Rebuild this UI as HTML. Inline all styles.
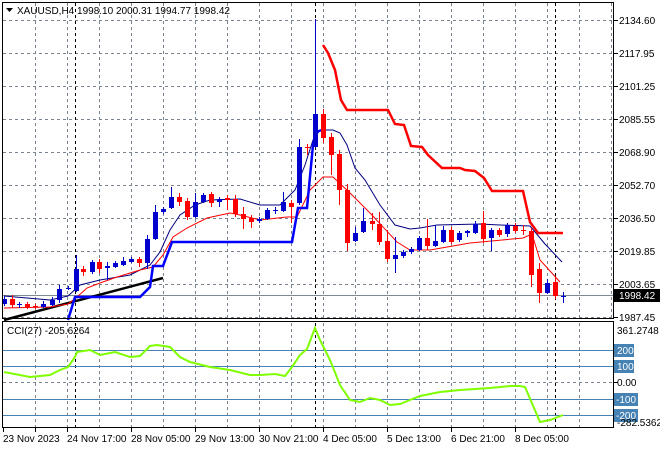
<!DOCTYPE html>
<html><head><meta charset="utf-8"><style>
html,body{margin:0;padding:0;background:#fff;}
svg{display:block;}
text{font-family:"Liberation Sans",sans-serif;font-size:10px;fill:#000;}
</style></head><body>
<svg width="660" height="450" viewBox="0 0 660 450" xmlns="http://www.w3.org/2000/svg">
<rect width="660" height="450" fill="#fff"/>
<g stroke="#7a8490" stroke-dasharray="3,3" stroke-width="1">
<path d="M35.5 3V318M67.5 3V318M99.5 3V318M131.5 3V318M163.5 3V318M195.5 3V318M227.5 3V318M259.5 3V318M291.5 3V318M323.5 3V318M355.5 3V318M387.5 3V318M419.5 3V318M451.5 3V318M483.5 3V318M515.5 3V318M547.5 3V318M579.5 3V318M611.5 3V318"/>
<path d="M35.5 323V427M67.5 323V427M99.5 323V427M131.5 323V427M163.5 323V427M195.5 323V427M227.5 323V427M259.5 323V427M291.5 323V427M323.5 323V427M355.5 323V427M387.5 323V427M419.5 323V427M451.5 323V427M483.5 323V427M515.5 323V427M547.5 323V427M579.5 323V427"/>
<path d="M3 20.5H614M3 53.5H614M3 86.5H614M3 119.5H614M3 152.5H614M3 185.5H614M3 218.5H614M3 251.5H614M3 284.5H614M3 317.5H614M3 382.5H614"/>
</g>
<g stroke="#000" stroke-dasharray="3,3" stroke-width="1">
<path d="M75.5 3V318M315.5 3V318M555.5 3V318M75.5 323V427M315.5 323V427M555.5 323V427"/>
</g>
<path d="M3 295.5H614" stroke="#808890" stroke-width="1"/>
<g stroke="#4682b4" stroke-width="1"><path d="M3 350.5H614M3 366.5H614M3 399.5H614M3 415.5H614"/></g>
<path d="M4 320L163 278" stroke="#000" stroke-width="2.5"/>
<polyline fill="none" stroke="#000080" stroke-width="1" points="4,296 50,300 68,296 80,285 100,280 130,275 150,265 160,252 170,230 180,215 195,205 210,200 240,199 260,205 280,205 295,190 305,165 313,140 320,130 333,130 340,133 347,145 355,168 365,180 380,205 395,225 410,229 420,228 437,225 480,224 500,225 530,226 545,244 562,262"/>
<polyline fill="none" stroke="#ff0000" stroke-width="1" points="4,308 50,307 68,304 77,297 87,288 100,283 117,277 140,270 153,267 163,255 173,237 187,228 207,218 230,213 240,215 260,220 287,217 297,217 310,190 323,177 333,177 350,193 370,213 397,242 410,250 430,250 470,243 523,238 532,234 540,260 560,282"/>
<polyline fill="none" stroke="#0000ff" stroke-width="2.5" points="68,320 75,297 140,297 150,287 153,266 163,266 172,242 292,242 298,208 307,208 313,145 316,132 322,130"/>
<polyline fill="none" stroke="#ff0000" stroke-width="2.5" points="323,45 328,53 335,70 341,100 347,110 388,110 395,124 404,125 411,146 422,147 428,155 442,168 460,168 465,170 475,171 484,178 492,191 523,191 530,222 538,233 563,233"/>
<g stroke-width="1">
<path stroke="#0000cc" d="M4.5 296V306M12.5 295V308M19.5 302V308M43.5 301V308M52.5 297V306M59.5 285V303M68.5 286V290M76.5 255V292M92.5 260V274M107.5 262V280M115.5 261V268M123.5 257V266M131.5 257V263M147.5 235V269M155.5 205V240M163.5 207V214M171.5 187V209M195.5 193V218M203.5 193V203M219.5 197V207M259.5 217V223M267.5 208V220M275.5 207V214M283.5 192V212M299.5 139V205M315.5 19V148M355.5 227V242M363.5 208V233M395.5 237V273M403.5 250V258M411.5 247V254M419.5 236V251M435.5 225V247M443.5 226V243M459.5 231V242M467.5 230V237M475.5 221V234M491.5 228V251M507.5 223V237M547.5 279V294M563.5 292V303"/>
<path stroke="#ff0000" d="M12.5 295V308M27.5 302V309M35.5 304V309M83.5 266V276M99.5 259V273M139.5 257V267M179.5 193V206M187.5 198V220M211.5 192V207M227.5 195V210M235.5 195V217M243.5 207V229M251.5 215V228M291.5 200V223M307.5 144V155M323.5 109V143M331.5 133V175M339.5 150V205M347.5 184V251M372.5 213V230M379.5 212V245M387.5 230V262M427.5 219V250M451.5 227V244M483.5 211V243M499.5 228V237M515.5 223V233M523.5 225V235M531.5 228V287M539.5 263V303M555.5 276V299"/>
</g>
<g fill="#0000cc">
<rect x="2" y="299" width="5" height="5"/><rect x="17" y="304" width="5" height="1"/><rect x="41" y="304" width="5" height="3"/><rect x="50" y="300" width="5" height="5"/><rect x="57" y="289" width="5" height="11"/><rect x="66" y="288" width="5" height="1"/><rect x="74" y="269" width="5" height="22"/><rect x="90" y="262" width="5" height="10"/><rect x="105" y="266" width="5" height="2"/><rect x="113" y="263" width="5" height="4"/><rect x="121" y="261" width="5" height="4"/><rect x="129" y="259" width="5" height="3"/><rect x="145" y="239" width="5" height="24"/><rect x="153" y="212" width="5" height="27"/><rect x="161" y="209" width="5" height="3"/><rect x="169" y="197" width="5" height="11"/><rect x="193" y="202" width="5" height="15"/><rect x="201" y="195" width="5" height="7"/><rect x="217" y="199" width="5" height="3"/><rect x="257" y="219" width="5" height="2"/><rect x="265" y="210" width="5" height="9"/><rect x="273" y="210" width="5" height="1"/><rect x="281" y="202" width="5" height="9"/><rect x="297" y="147" width="5" height="56"/><rect x="313" y="114" width="5" height="33"/><rect x="353" y="233" width="5" height="8"/><rect x="361" y="221" width="5" height="11"/><rect x="393" y="255" width="5" height="4"/><rect x="401" y="252" width="5" height="4"/><rect x="409" y="249" width="5" height="3"/><rect x="417" y="238" width="5" height="12"/><rect x="433" y="241" width="5" height="5"/><rect x="441" y="230" width="5" height="12"/><rect x="457" y="233" width="5" height="7"/><rect x="465" y="231" width="5" height="2"/><rect x="473" y="224" width="5" height="9"/><rect x="489" y="230" width="5" height="8"/><rect x="505" y="225" width="5" height="9"/><rect x="545" y="283" width="5" height="10"/><rect x="561" y="296" width="5" height="1"/>
</g>
<g fill="#ff0000">
<rect x="10" y="299" width="5" height="6"/><rect x="25" y="304" width="5" height="3"/><rect x="33" y="306" width="5" height="1"/><rect x="81" y="269" width="5" height="3"/><rect x="97" y="262" width="5" height="7"/><rect x="137" y="259" width="5" height="4"/><rect x="177" y="197" width="5" height="5"/><rect x="185" y="201" width="5" height="16"/><rect x="209" y="194" width="5" height="9"/><rect x="225" y="198" width="5" height="2"/><rect x="233" y="199" width="5" height="15"/><rect x="241" y="214" width="5" height="5"/><rect x="249" y="218" width="5" height="4"/><rect x="289" y="203" width="5" height="4"/><rect x="305" y="147" width="5" height="1"/><rect x="321" y="114" width="5" height="24"/><rect x="329" y="137" width="5" height="18"/><rect x="337" y="154" width="5" height="36"/><rect x="345" y="190" width="5" height="53"/><rect x="370" y="221" width="5" height="3"/><rect x="377" y="224" width="5" height="18"/><rect x="385" y="241" width="5" height="18"/><rect x="425" y="238" width="5" height="8"/><rect x="449" y="230" width="5" height="12"/><rect x="481" y="223" width="5" height="16"/><rect x="497" y="230" width="5" height="5"/><rect x="513" y="226" width="5" height="5"/><rect x="521" y="230" width="5" height="1"/><rect x="529" y="231" width="5" height="44"/><rect x="537" y="269" width="5" height="24"/><rect x="553" y="282" width="5" height="14"/>
</g>
<polyline fill="none" stroke="#7fff00" stroke-width="2" points="4,372 30,377 50,375 60,370 68,367 75,357 77,352 90,350 100,355 115,352 130,357 140,356 150,346 157,345 170,347 180,357 190,362 210,367 230,370 250,375 260,375 275,374 285,376 292,367 300,355 307,349 315,328 320,340 330,360 340,385 350,400 360,402 370,398 380,400 390,405 400,404 410,400 420,396 440,392 460,390 475,389 490,388 510,386 520,386 525,387 540,422 550,420 563,415"/>
<rect x="2.5" y="2.5" width="611" height="316" fill="none" stroke="#000"/>
<rect x="2.5" y="321.5" width="611" height="106" fill="none" stroke="#000"/>
<path d="M35.5 428v4M67.5 428v4M131.5 428v4M195.5 428v4M259.5 428v4M323.5 428v4M387.5 428v4M451.5 428v4M515.5 428v4M3.5 428v4" stroke="#000"/>
<path d="M614 20.5h4M614 53.5h4M614 86.5h4M614 119.5h4M614 152.5h4M614 185.5h4M614 218.5h4M614 251.5h4M614 284.5h4M614 317.5h4M614 382.5h4" stroke="#000"/>
<path d="M6 8h7l-3.5 4z" fill="#000"/>
<text x="17" y="14">XAUUSD,H4  1998.10 2000.31 1994.77 1998.42</text>
<text x="7" y="334">CCI(27) -205.6264</text>
<g>
<text x="619" y="24">2134.60</text><text x="619" y="57">2117.95</text><text x="619" y="90">2101.25</text><text x="619" y="123">2085.55</text><text x="619" y="156">2068.90</text><text x="619" y="189">2052.70</text><text x="619" y="222">2036.50</text><text x="619" y="255">2019.85</text><text x="619" y="288">2003.65</text><text x="619" y="321">1987.45</text>
</g>
<rect x="614" y="289" width="46" height="13" fill="#000"/>
<text x="619" y="299" style="fill:#fff">1998.42</text>
<text x="617" y="334">361.2748</text>
<rect x="614" y="344" width="20" height="13" fill="#4682b4"/><text x="617" y="354" style="fill:#fff">200</text>
<rect x="614" y="360" width="20" height="13" fill="#4682b4"/><text x="617" y="370" style="fill:#fff">100</text>
<text x="617" y="386">0.00</text>
<rect x="614" y="393" width="24" height="13" fill="#4682b4"/><text x="616" y="403" style="fill:#fff">-100</text>
<rect x="614" y="409" width="24" height="13" fill="#4682b4"/><text x="616" y="419" style="fill:#fff">-200</text>
<text x="617" y="426">-282.5362</text>
<text x="3" y="442">23 Nov 2023</text><text x="67" y="442">24 Nov 17:00</text><text x="131" y="442">28 Nov 05:00</text><text x="195" y="442">29 Nov 13:00</text><text x="259" y="442">30 Nov 21:00</text><text x="323" y="442">4 Dec 05:00</text><text x="387" y="442">5 Dec 13:00</text><text x="451" y="442">6 Dec 21:00</text><text x="515" y="442">8 Dec 05:00</text>
</svg>
</body></html>
